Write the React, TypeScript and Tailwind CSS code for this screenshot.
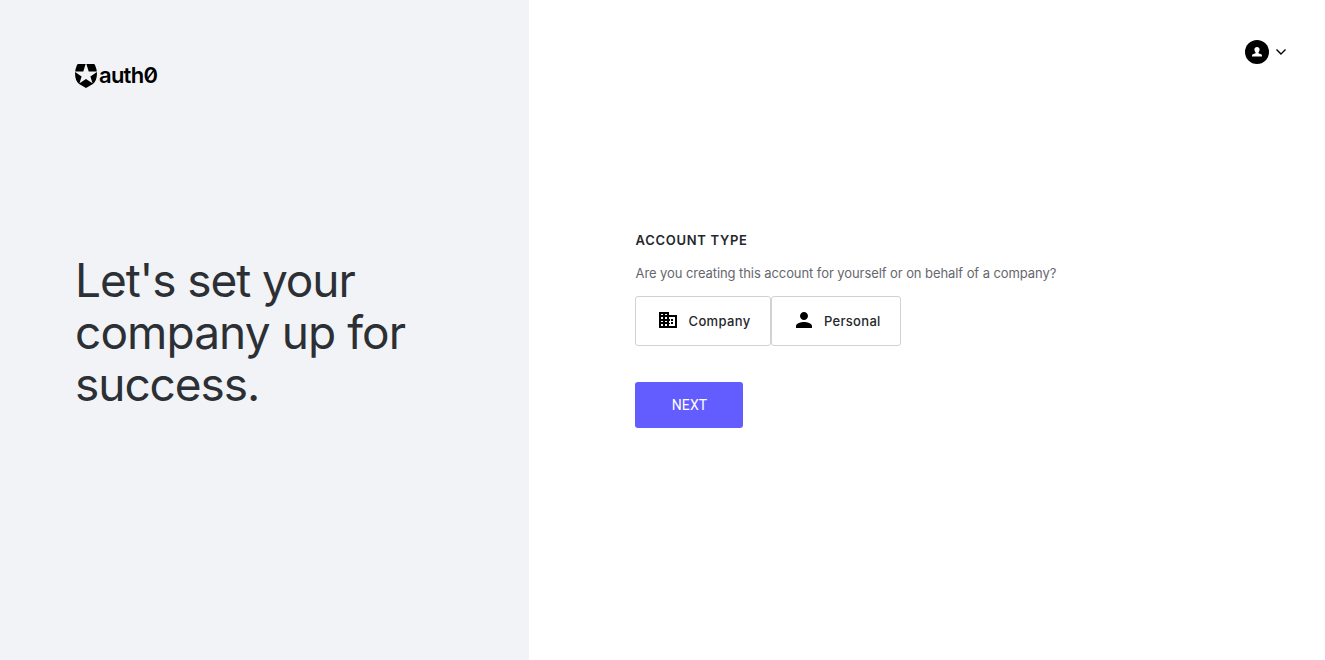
import React from "react";

function Logo() {
  return (
    <div className="flex h-6 items-center gap-[2px] text-black">
      <svg width="22" height="24" viewBox="0 0 22 24" fill="currentColor" aria-hidden="true">
        <path d="M2.7 0H10.6L8.3 7.4H.2C.6 4.6 1.4 2 2.7 0Z" />
        <path d="M19.3 0H11.4L13.7 7.4H21.8C21.4 4.6 20.6 2 19.3 0Z" />
        <path d="M.1 8.1 6.6 12.4 4.5 19.2 11 15 17.5 19.2 15.4 12.4 21.9 8.1C22.3 13.7 20.6 17.6 17.9 20.1L11 24 4.1 20.1C1.4 17.6-.3 13.7.1 8.1Z" />
      </svg>
      <span className="relative -top-px text-[22px] leading-6 font-semibold tracking-[-0.75px]">
        auth0
        <svg className="absolute top-[4px] right-px" width="12" height="16" viewBox="0 0 12 16" fill="none" stroke="currentColor" strokeWidth="1.6" aria-hidden="true">
          <path d="M2.5 13 10 3.2" />
        </svg>
      </span>
    </div>
  );
}

function BusinessIcon() {
  return (
    <svg className="relative -top-px" width="18" height="16" viewBox="0 0 18 16" shapeRendering="crispEdges" aria-hidden="true">
      <path fillRule="evenodd" d="M0 0h10v3h8v13H0ZM2 2v1h2V2ZM6 2v1h2V2ZM2 5v2h2V5ZM6 5v2h2V5ZM2 9v1h2V9ZM6 9v1h2V9ZM2 12v2h2v-2ZM6 12v2h2v-2ZM10 5v2h1v2h-1v2h1v1h-1v2h6V5Z" />
      <path d="M12 7h2v2h-2zM12 10h2v2h-2z" />
    </svg>
  );
}

function PersonIcon() {
  return (
    <svg className="relative -top-px" width="16" height="16" viewBox="4 4 16 16" aria-hidden="true">
      <path d="M12 12c2.21 0 4-1.79 4-4s-1.79-4-4-4-4 1.79-4 4 1.79 4 4 4zm0 2c-2.67 0-8 1.34-8 4v2h16v-2c0-2.66-5.33-4-8-4z" />
    </svg>
  );
}

export default function App() {
  return (
    <div className="flex h-screen font-[Inter,sans-serif] text-[#25272b]">
      <aside className="w-[529px] shrink-0 bg-[#f1f3f7] pt-16 pl-[75px]">
        <Logo />
        <h1 className="mt-[166px] w-[380px] text-[46px] leading-[52px] font-normal tracking-[-0.9px] text-[#2c3035]">
          <span className="tracking-[-1.1px]">Let's set your</span><br />company up for<br />
          <span className="tracking-[-1.05px]">success.</span>
        </h1>
      </aside>
      <main className="flex flex-1 flex-col bg-white">
        <header className="flex justify-end pt-10 pr-[39px]">
          <button className="flex h-6 items-center gap-[7px]" aria-label="Account menu">
            <span className="flex size-6 items-center justify-center rounded-full bg-black">
              <svg width="10" height="10" viewBox="0 0 10 10" fill="white" aria-hidden="true">
                <path d="M5 0C3.4 0 2.4 1 2.4 2.4c0 1.2.5 2.1 1.1 2.7v1.2L.9 7.2C.3 7.4 0 7.8 0 8.4V9.5h10V8.4C10 7.8 9.7 7.4 9.1 7.2L6.5 6.3V5.1C7.1 4.5 7.6 3.6 7.6 2.4 7.6 1 6.6 0 5 0Z" />
              </svg>
            </span>
            <svg width="10" height="6" viewBox="0 0 10 6" fill="none" stroke="black" strokeWidth="1.4" aria-hidden="true">
              <path d="M.5.5 5 5 9.5.5" />
            </svg>
          </button>
        </header>
        <section className="mt-[168px] flex flex-col items-start pl-[106px]">
          <h2 className="pl-[0.5px] text-[13px] leading-4 font-semibold tracking-[0.7px]">ACCOUNT TYPE</h2>
          <p className="mt-[17px] pl-[0.5px] text-[13px] leading-4 tracking-[-0.08px] text-[#65676e]">
            Are you creating this account for yourself or on behalf of a company?
          </p>
          <div className="mt-[15px] flex text-[13px] font-medium">
            <button className="flex h-[50px] w-[136px] items-center rounded-[3px] border border-[#d0d2d3] pl-[23px]">
              <BusinessIcon />
              <span className="mt-px ml-[11.5px] tracking-[0.35px]">Company</span>
            </button>
            <button className="flex h-[50px] w-[130px] items-center rounded-[3px] border border-[#d0d2d3] pl-6">
              <PersonIcon />
              <span className="mt-px ml-3 tracking-[0.3px]">Personal</span>
            </button>
          </div>
          <button className="mt-9 h-[46px] w-[108px] rounded-[3px] bg-[#635dff] pl-[1px] font-[Roboto,sans-serif] text-[14px] tracking-[0.1px] text-white">
            NEXT
          </button>
        </section>
      </main>
    </div>
  );
}
